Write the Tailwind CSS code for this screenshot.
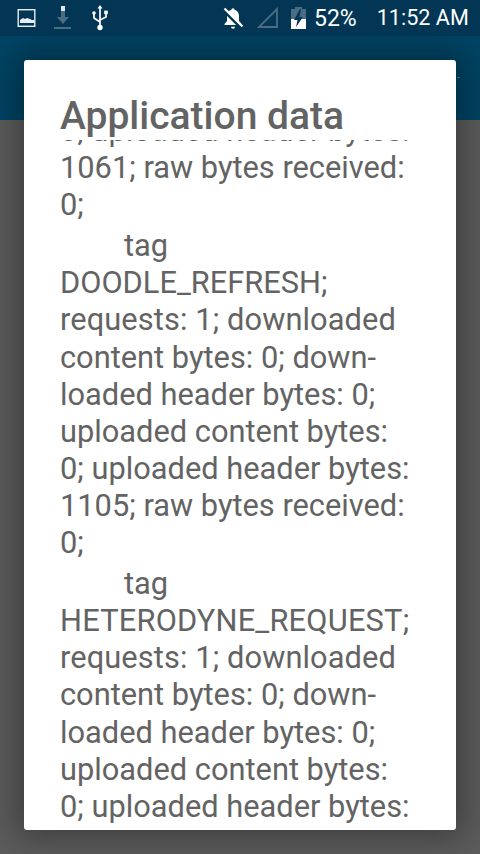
<!DOCTYPE html>
<html lang="en">
<head>
    <meta charset="UTF-8">
    <meta name="viewport" content="width=device-width, initial-scale=1.0">
    <title>Application data</title>
    <script src="https://cdn.jsdelivr.net/npm/@tailwindcss/browser@4"></script>
</head>
<body class="relative w-[480px] h-[854px] overflow-hidden bg-[#5c5c5c] font-['Roboto',sans-serif]">
    <!-- status bar -->
    <div class="relative z-20 flex items-center h-9 bg-[#023654] text-white">
        <svg class="ml-[17px] w-[20px] h-[20px]" viewBox="0 0 20 20" fill="none">
            <rect x="1.2" y="1.7" width="16.6" height="16.6" stroke="#e8eef2" stroke-width="1.4"/>
            <path d="M3 15v-3l3-2 2 1 2-1 3 1 2 1 2 0v3z" fill="#e8eef2"/>
        </svg>
        <svg class="ml-[17px] w-[18px] h-[24px]" viewBox="0 0 18 24" fill="#4b6d84">
            <rect x="7" y="0" width="4" height="5" fill="#dfe6ea"/>
            <path d="M7 5h4v6h4l-6 7-6-7h4z"/>
            <rect x="0" y="21" width="17" height="2"/>
        </svg>
        <svg class="ml-[19px] w-[18px] h-[26px]" viewBox="0 0 18 26" fill="none" stroke="#fff" stroke-width="1.7">
            <path d="M9 2v20M9 17l-6-4V9M9 15l6-3V8"/>
            <path d="M9 0l2.5 3.5h-5z" fill="#fff" stroke="none"/>
            <circle cx="3" cy="8" r="1.8" fill="#fff" stroke="none"/>
            <rect x="13.2" y="5.6" width="3.6" height="3.6" fill="#fff" stroke="none"/>
            <circle cx="9" cy="22.5" r="2.7" fill="#fff" stroke="none"/>
        </svg>
        <svg class="ml-[113px] w-[22px] h-[24px]" viewBox="0 0 22 24" fill="#fff">
            <path d="M11 2.200a1.600 1.600 0 0 1 1.600 1.500c3 .8 4.400 3.400 4.400 6.300v5l2.500 3v1H2.500v-1l2.500-3v-5c0-1.500.3-2.800 1-3.900 1-1.300 2.500-2.100 3.400-2.400a1.600 1.600 0 0 1 1.600-1.500z"/>
            <path d="M9 20.800h4a2 2 0 0 1-4 0z"/>
            <path d="M1.500 4.500l18.500 18.500" stroke="#023654" stroke-width="2.500"/>
            <path d="M2.500 2.500l18 18" stroke="#fff" stroke-width="2.200"/>
        </svg>
        <svg class="ml-[13px] w-[22px] h-[22px]" viewBox="0 0 22 22" fill="none" stroke="#4b6d84" stroke-width="1.800">
            <path d="M20 2v18H2z"/>
        </svg>
        <svg class="ml-[12px] w-[15px] h-[22px]" viewBox="0 0 15 22">
            <path d="M4 2V0h7v2h4v10H0V2z" fill="#4b6d84"/>
            <path d="M0 12h15v10H0z" fill="#fff"/>
            <path d="M9 2L3 13h3.500L5 20l7-10H8.500L10 2z" fill="#023654"/>
        </svg>
        <span class="ml-[8px] text-[23px] leading-none">52%</span>
        <span class="ml-[20px] text-[21.6px] leading-none">11:52 AM</span>
    </div>

    <!-- app bar behind the dialog -->
    <div class="h-[84px] bg-[#004464]"></div>
    <div class="absolute left-[457px] top-[77px] w-[3px] h-px bg-white/30"></div>

    <!-- scrim edges are darker near the dialog -->
    <div class="absolute left-6 top-[60px] w-[432px] h-[770px] z-10 flex flex-col bg-white rounded-[3px] shadow-[0_0_32px_8px_rgba(0,0,0,0.34)] text-[#636363]">
        <h1 class="shrink-0 h-[80px] pl-9 pt-[36px] text-[39px] leading-[40px] font-medium">Application data</h1>
        <div class="flex-1 overflow-hidden pl-9 text-[30.8px] leading-[37.1px]">
            <div class="-mt-[28px] whitespace-nowrap">
                <p>0; uploaded header bytes:</p>
                <p>1061; raw bytes received:</p>
                <p>0;</p>
                <p class="mt-1 pl-16">tag</p>
                <p>DOODLE_REFRESH;</p>
                <p class="tracking-[0.1px]">requests: 1; downloaded</p>
                <p>content bytes: 0; down-</p>
                <p>loaded header bytes: 0;</p>
                <p>uploaded content bytes:</p>
                <p>0; uploaded header bytes:</p>
                <p>1105; raw bytes received:</p>
                <p>0;</p>
                <p class="mt-1 pl-16">tag</p>
                <p class="tracking-[0.2px]">HETERODYNE_REQUEST;</p>
                <p class="tracking-[0.1px]">requests: 1; downloaded</p>
                <p>content bytes: 0; down-</p>
                <p>loaded header bytes: 0;</p>
                <p>uploaded content bytes:</p>
                <p>0; uploaded header bytes:</p>
                <p>1105; raw bytes received:</p>
            </div>
        </div>
    </div>
</body>
</html>
